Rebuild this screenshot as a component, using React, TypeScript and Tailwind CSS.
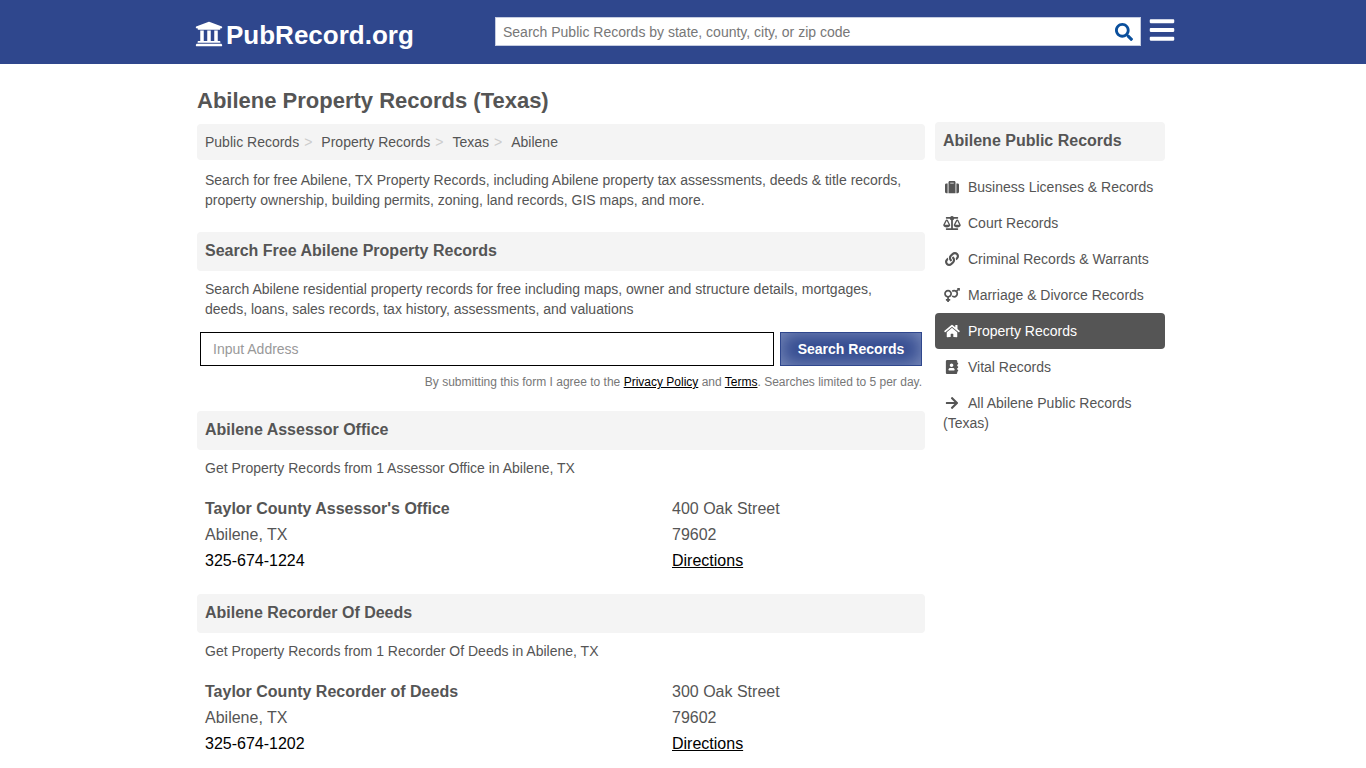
import { useState } from "react";
import type { ReactNode } from "react";
import type { IconType } from "react-icons";
import {
  FaAddressBook,
  FaArrowRight,
  FaBalanceScale,
  FaBars,
  FaHome,
  FaLink,
  FaSearch,
  FaSuitcase,
  FaUniversity,
  FaVenusMars,
} from "react-icons/fa";

type Office = {
  heading: string;
  intro: string;
  name: string;
  city: string;
  phone: string;
  street: string;
  zip: string;
};

const offices: Office[] = [
  {
    heading: "Abilene Assessor Office",
    intro: "Get Property Records from 1 Assessor Office in Abilene, TX",
    name: "Taylor County Assessor's Office",
    city: "Abilene, TX",
    phone: "325-674-1224",
    street: "400 Oak Street",
    zip: "79602",
  },
  {
    heading: "Abilene Recorder Of Deeds",
    intro: "Get Property Records from 1 Recorder Of Deeds in Abilene, TX",
    name: "Taylor County Recorder of Deeds",
    city: "Abilene, TX",
    phone: "325-674-1202",
    street: "300 Oak Street",
    zip: "79602",
  },
];

const categories: { label: string; icon: IconType; active?: boolean }[] = [
  { label: "Business Licenses & Records", icon: FaSuitcase },
  { label: "Court Records", icon: FaBalanceScale },
  { label: "Criminal Records & Warrants", icon: FaLink },
  { label: "Marriage & Divorce Records", icon: FaVenusMars },
  { label: "Property Records", icon: FaHome, active: true },
  { label: "Vital Records", icon: FaAddressBook },
  { label: "All Abilene Public Records (Texas)", icon: FaArrowRight },
];

const crumbs = ["Public Records", "Property Records", "Texas", "Abilene"];

function SectionHeading({ children }: { children: ReactNode }) {
  return <h2 className="rounded bg-[#f4f4f4] px-2 pt-[9px] pb-2.5 text-base/5 font-bold">{children}</h2>;
}

function Header() {
  const [query, setQuery] = useState("");

  return (
    <header className="bg-[#2f478d] text-white">
      <div className="mx-auto flex h-16 max-w-[972px] items-start pt-4 pr-1">
        <a href="#" className="flex w-[298px] shrink-0 items-center gap-[3px] pt-[3px] text-[26px]/8 font-bold">
          <FaUniversity className="-ml-0.5 mb-[3px] size-7" />
          PubRecord.org
        </a>
        <form className="mt-px flex h-[29px] flex-1 border border-[#c5cce0] bg-white" onSubmit={(e) => e.preventDefault()}>
          <input
            type="text"
            aria-label="Search public records"
            placeholder="Search Public Records by state, county, city, or zip code"
            value={query}
            onChange={(e) => setQuery(e.target.value)}
            className="min-w-0 flex-1 px-[7px] text-sm text-[#555] placeholder:text-[#777] focus:outline-none"
          />
          <button type="submit" aria-label="Search" className="px-[7px] text-[#0a4f9c]">
            <FaSearch className="size-[18px]" />
          </button>
        </form>
        <button type="button" aria-label="Menu" className="-mr-2 ml-2 w-6">
          <FaBars className="-ml-px size-7" />
        </button>
      </div>
    </header>
  );
}

function AddressSearch() {
  const [address, setAddress] = useState("");

  return (
    <form className="mt-[13px] px-[3px]" onSubmit={(e) => e.preventDefault()}>
      <div className="flex gap-1.5">
        <input
          type="text"
          aria-label="Address"
          placeholder="Input Address"
          value={address}
          onChange={(e) => setAddress(e.target.value)}
          className="h-[34px] min-w-0 flex-1 border border-black px-3 text-sm placeholder:text-[#999] focus:outline-none"
        />
        <button
          type="submit"
          className="h-[34px] w-[142px] border border-[#2f478d] bg-[#2f478d] text-sm font-bold text-white shadow-[inset_0_0_20px_#8494c0]"
        >
          Search Records
        </button>
      </div>
      <p className="mt-2 text-right text-xs/4 text-[#777]">
        By submitting this form I agree to the <a href="#" className="text-black underline">Privacy Policy</a> and{" "}
        <a href="#" className="text-black underline">Terms</a>. Searches limited to 5 per day.
      </p>
    </form>
  );
}

function OfficeSection({ office }: { office: Office }) {
  return (
    <section className="mb-5">
      <SectionHeading>{office.heading}</SectionHeading>
      <p className="mt-2 px-2">{office.intro}</p>
      <div className="mt-[18px] grid grid-cols-[467fr_245fr] px-2 text-base/[26px]">
        <div>
          <h3 className="font-bold">{office.name}</h3>
          <p>{office.city}</p>
          <p><a href="#" className="text-black">{office.phone}</a></p>
        </div>
        <div>
          <p>{office.street}</p>
          <p>{office.zip}</p>
          <a href="#" className="text-black underline">Directions</a>
        </div>
      </div>
    </section>
  );
}

function Sidebar() {
  return (
    <aside className="mt-[34px] w-[230px] shrink-0">
      <SectionHeading>Abilene Public Records</SectionHeading>
      <ul className="mt-2">
        {categories.map(({ label, icon: Icon, active }) => (
          <li key={label}>
            <a href="#" className={active ? "block rounded bg-[#555] p-2 text-white" : "block p-2"}>
              <Icon className="mr-[7px] inline-block h-3.5 w-[18px] align-[-2px]" />
              {label}
            </a>
          </li>
        ))}
      </ul>
    </aside>
  );
}

export default function App() {
  return (
    <div className="min-h-screen bg-white font-['Liberation_Sans',Arial,sans-serif] text-sm/5 text-[#555]">
      <Header />
      <div className="mx-auto flex max-w-[972px] gap-2.5 pt-6 pr-1">
        <main className="min-w-0 flex-1">
          <h1 className="pt-px text-[22px]/6 font-bold">Abilene Property Records (Texas)</h1>
          <nav aria-label="Breadcrumb" className="mt-[11px] rounded bg-[#f4f4f4] p-2">
            <ol className="flex">
              {crumbs.map((crumb, i) => (
                <li key={crumb}>
                  <a href="#">{crumb}</a>
                  {i < crumbs.length - 1 && <span className="pr-[9px] pl-[5px] text-[#ccc]">&gt;</span>}
                </li>
              ))}
            </ol>
          </nav>
          <p className="mt-2.5 px-2">
            Search for free Abilene, TX Property Records, including Abilene property tax assessments, deeds &amp; title
            records, property ownership, building permits, zoning, land records, GIS maps, and more.
          </p>
          <section className="mt-[22px] mb-[21px]">
            <SectionHeading>Search Free Abilene Property Records</SectionHeading>
            <p className="mt-2 px-2">
              Search Abilene residential property records for free including maps, owner and structure details,
              mortgages, deeds, loans, sales records, tax history, assessments, and valuations
            </p>
            <AddressSearch />
          </section>
          {offices.map((office) => (
            <OfficeSection key={office.heading} office={office} />
          ))}
        </main>
        <Sidebar />
      </div>
    </div>
  );
}
